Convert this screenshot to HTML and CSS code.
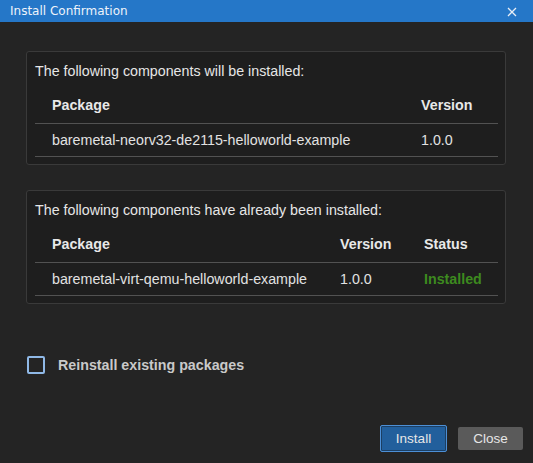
FILE: index.html
```html
<!DOCTYPE html>
<html>
<head>
<meta charset="utf-8">
<link rel="stylesheet" href="styles.css">
</head>
<body>
<div class="window">
  <div class="titlebar">
    <span class="title">Install Confirmation</span>
    <svg class="close-x" width="10" height="10" viewBox="0 0 10 10"><path d="M1 1L9 9M9 1L1 9" stroke="#e8eef6" stroke-width="1.3" fill="none"/></svg>
  </div>
  <div class="content">
    <div class="panel">
      <div class="panel-title">The following components will be installed:</div>
      <div class="table t2">
        <div class="cell head">Package</div>
        <div class="cell head">Version</div>
        <div class="cell row">baremetal-neorv32-de2115-helloworld-example</div>
        <div class="cell row">1.0.0</div>
      </div>
    </div>
    <div class="panel second">
      <div class="panel-title">The following components have already been installed:</div>
      <div class="table t3">
        <div class="cell head">Package</div>
        <div class="cell head">Version</div>
        <div class="cell head">Status</div>
        <div class="cell row">baremetal-virt-qemu-helloworld-example</div>
        <div class="cell row">1.0.0</div>
        <div class="cell row installed">Installed</div>
      </div>
    </div>
    <label class="check">
      <span class="box"></span>
      <span class="check-label">Reinstall existing packages</span>
    </label>
    <div class="spacer"></div>
    <div class="buttons">
      <button class="btn primary">Install</button>
      <button class="btn secondary">Close</button>
    </div>
  </div>
</div>
</body>
</html>
```
FILE: styles.css
```css
* { box-sizing: border-box; }
html, body {
  margin: 0;
  padding: 0;
  width: 533px;
  height: 463px;
  background: #242424;
  overflow: hidden;
}
.window {
  width: 533px;
  height: 463px;
  display: flex;
  flex-direction: column;
  font-family: "Liberation Sans", Arial, sans-serif;
  color: #e4e4e4;
}
.titlebar {
  height: 22px;
  background: #2577c8;
  display: flex;
  align-items: center;
  justify-content: space-between;
  padding: 0 16px 0 10px;
}
.title {
  font-family: "DejaVu Sans", "Noto Sans", sans-serif;
  font-size: 12px;
  color: #eef3fa;
}
.close-x { display: block; margin-top: 1px; }
.content {
  flex: 1;
  display: flex;
  flex-direction: column;
  padding: 29px 27px 11px 26px;
}
.panel {
  background: #1e1e1e;
  border: 1px solid #3a3a3a;
  border-radius: 3px;
  padding: 9px 7px 8px 8px;
  height: 114px;
}
.panel.second { margin-top: 25px; }
.panel-title {
  font-size: 14.25px;
  line-height: 20px;
  color: #e6e6e6;
}
.table {
  display: grid;
}
.t2 { grid-template-columns: 369px 1fr; }
.t3 { grid-template-columns: 288px 84px 1fr; }
.cell {
  font-size: 14.25px;
  padding-left: 17px;
  display: flex;
  align-items: center;
  border-bottom: 1px solid #525252;
}
.head {
  font-weight: bold;
  height: 43px;
  padding-top: 6px;
  color: #e8e8e8;
}
.row {
  height: 33px;
  color: #e2e2e2;
}
.installed {
  color: #3d8a1f;
  font-weight: bold;
}
.check {
  margin-top: 52px;
  display: flex;
  align-items: center;
  margin-left: 1px;
}
.box {
  width: 18px;
  height: 18px;
  border: 2px solid #8fb8e6;
  border-radius: 2px;
}
.check-label {
  margin-left: 13px;
  font-weight: bold;
  font-size: 14.25px;
  color: #c9c9c9;
}
.spacer { flex: 1; }
.buttons {
  display: flex;
  justify-content: flex-end;
  align-items: center;
  gap: 11px;
  margin-right: -17px;
}
.btn {
  font-family: "Liberation Sans", Arial, sans-serif;
  font-size: 13.5px;
  color: #e6e6e6;
  border-radius: 2px;
  padding: 0;
}
.primary {
  width: 67px;
  height: 27px;
  background: #225f9c;
  border: 1px solid #4c8fd6;
  box-shadow: inset 0 0 0 1px #1c3f63;
}
.secondary {
  width: 65px;
  height: 23px;
  background: #5a5a5a;
  border: none;
}
```
